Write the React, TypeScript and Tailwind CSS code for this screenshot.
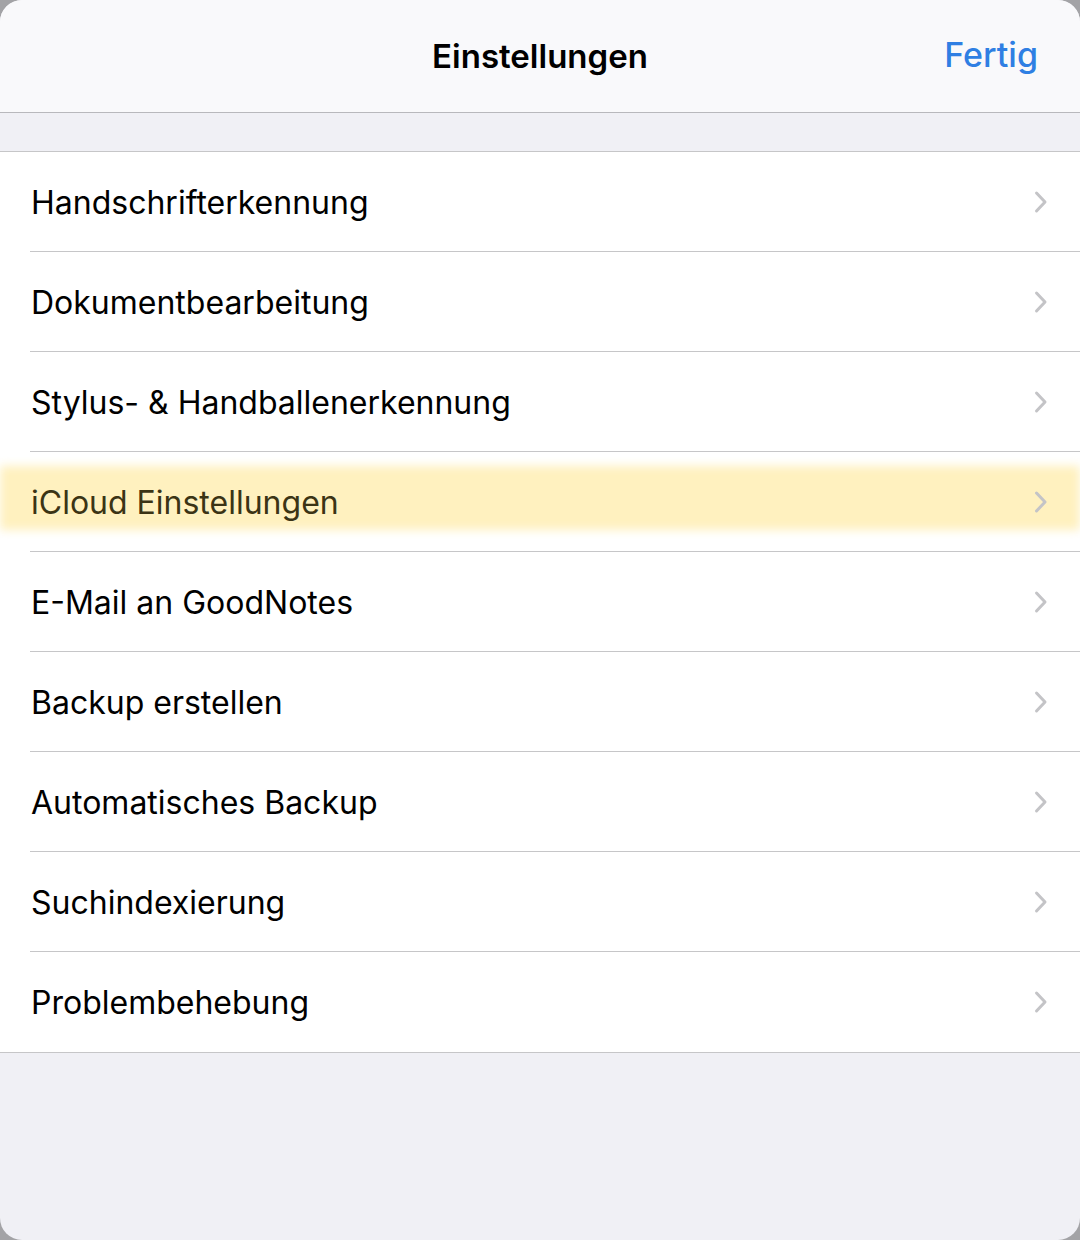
const items = [
  "Handschrifterkennung",
  "Dokumentbearbeitung",
  "Stylus- & Handballenerkennung",
  "iCloud Einstellungen",
  "E-Mail an GoodNotes",
  "Backup erstellen",
  "Automatisches Backup",
  "Suchindexierung",
  "Problembehebung",
]

function Chevron() {
  return (
    <svg width="16" height="24" viewBox="0 0 16 24" fill="none">
      <path d="M3.5 3l8.5 9-8.5 9" stroke="#c4c4c7" strokeWidth="3" strokeLinecap="round" strokeLinejoin="round" />
    </svg>
  )
}

export default function App() {
  return (
    <div className="w-[1080px] h-[1240px] bg-[#a3a3a6]" style={{ fontFamily: "Inter, 'Noto Sans', sans-serif" }}>
      <div className="w-full h-full rounded-[22px] overflow-hidden bg-[#f0f0f5] flex flex-col">
        <div className="h-[113px] shrink-0 bg-[#f9f9fb] border-b border-[#b8b8bc] flex items-center justify-center relative">
          <span className="text-[33px] font-semibold text-black translate-y-[1px]">Einstellungen</span>
          <span className="absolute right-[42px] top-[35px] text-[34px] font-medium text-[#2f7fe3] leading-[40px]">Fertig</span>
        </div>
        <div className="h-[38px] shrink-0" />
        <div className="bg-white border-t border-b border-[#c6c6c8]">
          {items.map((label, i) => (
            <div key={label} className="pl-[30px] relative">
              {i === 3 && (
                <div className="absolute left-0 right-0 top-[14px] h-[64px] bg-[#fff1bf] blur-[5px]" />
              )}
              <div
                className={
                  "relative h-[100px] flex items-center justify-between pl-[1px] pr-[31px] " +
                  (i < items.length - 1 ? "border-b border-[#c6c6c8]" : "")
                }
              >
                <span className={"text-[32px] translate-y-[1px] " + (i === 3 ? "text-[#3b3415]" : "text-black")}>{label}</span>
                <Chevron />
              </div>
            </div>
          ))}
        </div>
      </div>
    </div>
  )
}
